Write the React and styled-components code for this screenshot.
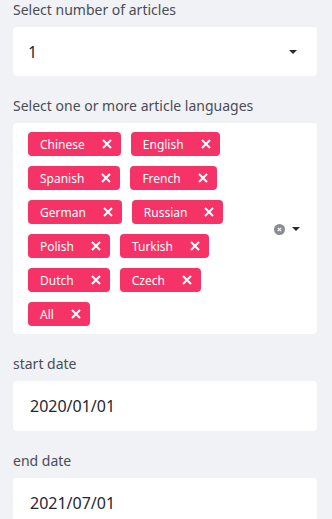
import styled, { createGlobalStyle } from "styled-components"

const GlobalStyle = createGlobalStyle`
    body {
        margin: 0;
        background-color: #f0f2f6;
        font-family: "Noto Sans", "Open Sans", sans-serif;
        color: #31333f;
    }
`

const Sidebar = styled.div`
    display: flex;
    flex-direction: column;
    gap: 20px;
    padding: 0 15px 0 13px;
    width: 332px;
    box-sizing: border-box;
`

const Widget = styled.div`
    display: flex;
    flex-direction: column;
`

const Label = styled.label`
    font-size: 14px;
    line-height: 20px;
    color: #4a4c57;
    margin-bottom: 7px;
`

const Box = styled.div`
    display: flex;
    align-items: center;
    background-color: #ffffff;
    border-radius: 4px;
    min-height: ${({ $h }) => $h}px;
    box-sizing: border-box;
    padding: ${({ $pad }) => $pad};
`

const Value = styled.span`
    flex: 1;
    font-size: 16px;
    color: #262730;
`

const TagArea = styled.div`
    display: flex;
    flex-wrap: wrap;
    gap: 10px;
    width: 236px;
`

const Tag = styled.span`
    display: inline-flex;
    align-items: center;
    height: 24px;
    padding: 0 9px 0 12px;
    border-radius: 4px;
    background-color: #f63366;
    color: #ffffff;
    font-size: 12px;
    box-sizing: border-box;
`

const TagClose = styled.svg`
    margin-left: 17px;
    width: 10px;
    height: 10px;
`

const Icons = styled.div`
    display: flex;
    align-items: center;
    gap: 7px;
    margin-left: auto;
    margin-right: 17px;
`

const Caret = () => (
    <svg width="8" height="4" viewBox="0 0 8 4">
        <path d="M0 0 H8 L4 4 Z" fill="#262730" />
    </svg>
)

const ClearIcon = () => (
    <svg width="11" height="11" viewBox="0 0 11 11">
        <circle cx="5.5" cy="5.5" r="5.5" fill="#8a8c96" />
        <path d="M3.8 3.8 L7.2 7.2 M7.2 3.8 L3.8 7.2" stroke="#ffffff" strokeWidth="1.2" />
    </svg>
)

const languages = ["Chinese", "English", "Spanish", "French", "German", "Russian", "Polish", "Turkish", "Dutch", "Czech", "All"]

const App = () => {
    return (
        <>
            <GlobalStyle />
            <Sidebar>
                <Widget>
                    <Label>Select number of articles</Label>
                    <Box $h={49} $pad="0 20px 0 15px">
                        <Value>1</Value>
                        <Caret />
                    </Box>
                </Widget>
                <Widget>
                    <Label>Select one or more article languages</Label>
                    <Box $h={211} $pad="9px 0 8px 15px">
                        <TagArea>
                            {languages.map((lang) => (
                                <Tag key={lang}>
                                    {lang}
                                    <TagClose viewBox="0 0 10 10">
                                        <path d="M1 1 L9 9 M9 1 L1 9" stroke="#ffffff" strokeWidth="2" />
                                    </TagClose>
                                </Tag>
                            ))}
                        </TagArea>
                        <Icons>
                            <ClearIcon />
                            <Caret />
                        </Icons>
                    </Box>
                </Widget>
                <Widget>
                    <Label>start date</Label>
                    <Box $h={50} $pad="0 17px">
                        <Value>2020/01/01</Value>
                    </Box>
                </Widget>
                <Widget>
                    <Label>end date</Label>
                    <Box $h={50} $pad="0 17px">
                        <Value>2021/07/01</Value>
                    </Box>
                </Widget>
            </Sidebar>
        </>
    )
}

export default App
